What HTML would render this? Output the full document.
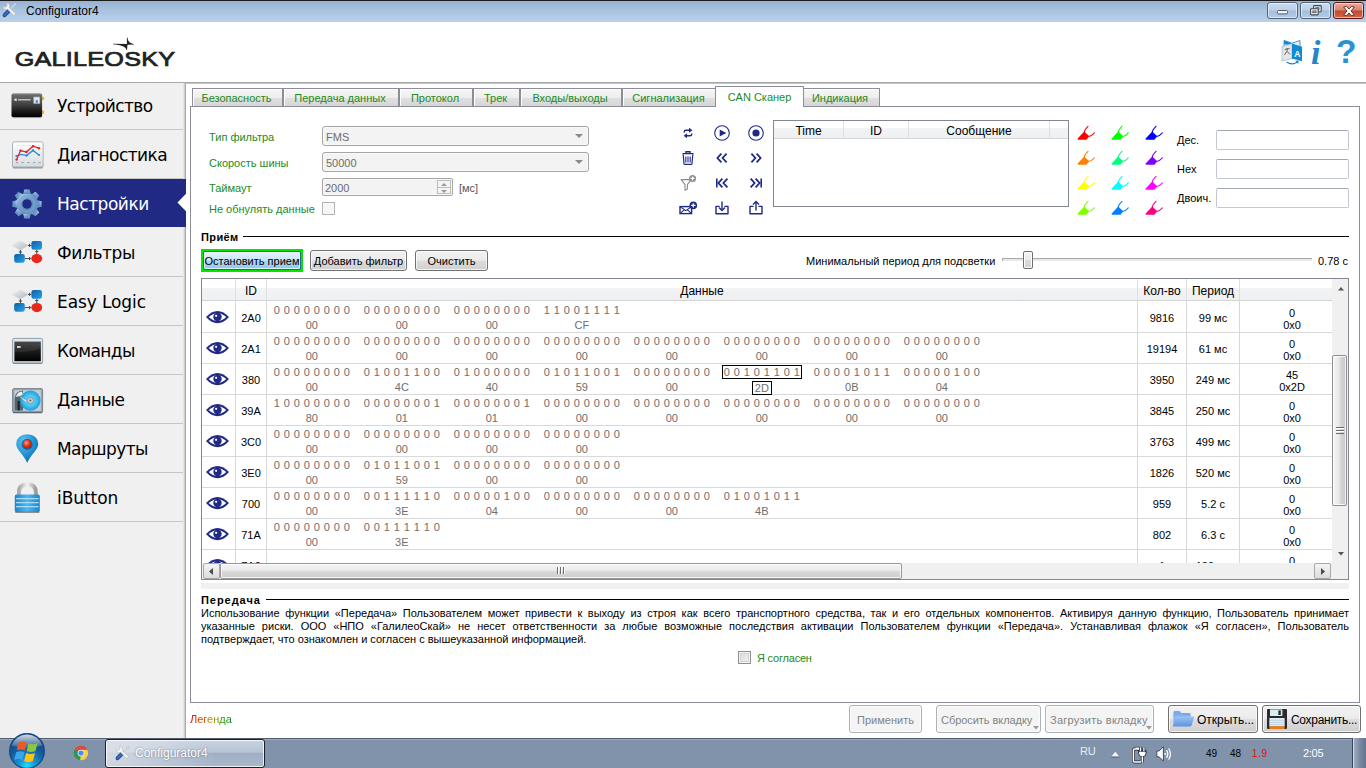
<!DOCTYPE html>
<html lang="ru">
<head>
<meta charset="utf-8">
<title>Configurator4</title>
<style>
*{box-sizing:border-box;margin:0;padding:0}
html,body{width:1366px;height:768px;overflow:hidden;background:#fff}
body{position:relative;font-family:"Liberation Sans","DejaVu Sans",sans-serif;font-size:11px;color:#000;line-height:13px}
.a{position:absolute}
.nw{white-space:nowrap}
.g{color:#228b22}
.jl{text-align:justify;text-align-last:justify;white-space:normal;line-height:13px;height:13px;overflow:hidden}
svg{position:absolute;overflow:visible}
/* title bar */
#titlebar{position:absolute;left:0;top:0;width:1366px;height:22px;background:linear-gradient(#98b2d3 0%,#a9c3e0 45%,#b9d1ea 100%);border-top:1px solid #1c1c1c}
#titlebar .t{position:absolute;left:26px;top:3px;font-size:12px;line-height:14px;color:#000;white-space:nowrap}
.wb{position:absolute;top:1px;height:17px;width:31px;border:1px solid #55627a;border-radius:3px;background:linear-gradient(#c9dbef 0%,#bcd0e8 48%,#a4bedc 52%,#b3cbe6 100%);box-shadow:inset 0 0 0 1px rgba(255,255,255,.55)}
.wb.c{background:linear-gradient(#e9a99b 0%,#d98572 48%,#c4482a 52%,#d06a4a 100%);border-color:#5b1a1a}
/* header */
#header{position:absolute;left:0;top:22px;width:1366px;height:60px;background:#fff}
#hshadow{position:absolute;left:0;top:82px;width:1366px;height:2px;background:linear-gradient(#9a9a9a,#d0d0d0)}
/* sidebar */
#sidebar{position:absolute;left:0;top:83px;width:186px;height:655px;background:linear-gradient(90deg,#f0f0f0 0,#f0f0f0 183px,#cfcfcf 184.5px,#989898 186px)}
.si{position:absolute;left:0;width:183px;height:49px;border-bottom:1px solid #c6c6c6;font-family:"DejaVu Sans","Liberation Sans",sans-serif;font-size:17px;line-height:20px;letter-spacing:-.55px}
.si span{position:absolute;left:57px;top:15px;white-space:nowrap}
.si.sel{background:#202a85;color:#fff;border-bottom:none;height:48px;width:186px}
/* tabs */
.tab{position:absolute;top:88px;height:18px;border:1px solid #8b8e98;border-bottom:none;background:linear-gradient(#f6f6f6 0%,#eeeeee 50%,#e0e0e0 51%,#d6d6d6 100%);color:#228b22;text-align:center;line-height:19px;white-space:nowrap;box-shadow:inset 1px 1px 0 #fff;padding-right:2px}
.tab.sel{top:86px;height:21px;background:#fff;line-height:21px;z-index:3;padding-right:0}
#pane{position:absolute;left:190px;top:106px;width:1170px;height:597px;border:1px solid #8b8e98;background:#fff}
/* form */
.combo{position:absolute;left:322px;width:267px;height:20px;border:1px solid #a6a6a6;border-radius:3px;background:#f3f3f3;color:#6d6d6d;line-height:20px;padding-left:3px;box-shadow:inset 0 0 0 1px #fafafa}
.combo i{position:absolute;right:5px;top:7px;width:0;height:0;border-left:4px solid transparent;border-right:4px solid transparent;border-top:4px solid #8a8a8a}
.edit{position:absolute;left:1216px;width:133px;height:20px;border:1px solid #c3c7cf;border-top-color:#a3a7b0;border-radius:2px;background:#fff}
.btn{position:absolute;height:22px;border:1px solid #707070;border-radius:3px;background:linear-gradient(#f2f2f2 0%,#ebebeb 48%,#dddddd 52%,#cfcfcf 100%);text-align:center;line-height:20px;white-space:nowrap;box-shadow:inset 0 0 0 1px rgba(255,255,255,.7)}
.btn.dis{color:#838383;border-color:#adb2b5;background:#f4f4f4}
.sect{position:absolute;left:201px;font-weight:bold;line-height:13px;white-space:nowrap}
.sectline{position:absolute;height:1px;background:#000}
/* table */
#tbl{position:absolute;left:201px;top:278px;width:1148px;height:302px;border:1px solid #828790;background:#fff;overflow:hidden}
.hdr{position:absolute;top:0;height:22px;background:linear-gradient(#fff 0%,#fff 42%,#f2f3f5 43%,#eff0f2 100%);border-right:1px solid #dedfe1;border-bottom:1px solid #d5d5d5;text-align:center;line-height:24px;white-space:nowrap;font-size:12px}
.row{position:absolute;left:0;width:1146px;height:31px;border-bottom:1px solid #d9d9d9}
.row .c{position:absolute;top:0;bottom:0;border-right:1px solid #d9d9d9;text-align:center;line-height:33px;white-space:nowrap}
.by{position:absolute;top:1px;width:90px;color:#6e6e6e;text-align:center;line-height:14px;white-space:nowrap}
.r0 .by{top:2px}
.r0 .c{line-height:35px}
.r0 svg{margin-top:.8px}
.by b{display:block;font-weight:normal;word-spacing:.82px;height:14px}
.by u{display:block;text-decoration:none;height:14px;margin-top:1px}
.v2{position:absolute;left:0;right:0;top:2px;line-height:12px}
/* taskbar */
#taskbar{position:absolute;left:0;top:738px;width:1366px;height:30px;background:linear-gradient(#525d72 0,#525d72 1px,#9aa9bf 1px,#9aa9bf 2px,#8093ab 2px,#8093ab 100%)}
</style>
</head>
<body>
<!-- ===== title bar ===== -->
<div id="titlebar"><div class="t">Configurator4</div>
<svg style="left:0;top:-1px" width="20" height="20" viewBox="0 0 20 20"><path d="M15.3 4 L9.4 9.9" stroke="#c9d1dc" stroke-width="1.7" stroke-linecap="round"/><path d="M13.6 4.6 L14.4 3.4 L15.9 3.5 L16 5 L14.9 5.9 Z" fill="#dde4ec" stroke="#9aa6b5" stroke-width=".4"/><path d="M9.3 10.3 L4.6 15.2" stroke="#1f4e9e" stroke-width="4" stroke-linecap="round"/><path d="M9.3 10.3 L4.6 15.2" stroke="#3f76c9" stroke-width="1.6" stroke-linecap="round" stroke-dasharray="1 1"/><path d="M9.7 6.2 L8.9 3.5 L6.6 3 L7.2 5.5 L5.5 7.2 L3 6.6 L3.5 8.9 L6.2 9.7 L7.6 9.2 L13.2 15 Q14.2 15.6 15 14.8 Q15.7 14 15 13 L9.2 7.6 Z" fill="#f2f3f4" stroke="#b4b2a8" stroke-width=".5" stroke-linejoin="round"/></svg>
<div class="wb" style="left:1267px"><svg style="left:9px;top:7px" width="11" height="5"><rect x=".5" y=".5" width="10" height="3.4" rx="1" fill="#f4f6f8" stroke="#545b66"/></svg></div>
<div class="wb" style="left:1300px"><svg style="left:9px;top:2px" width="12" height="11"><rect x="3.6" y=".6" width="7.6" height="6.2" rx=".8" fill="#f4f6f8" stroke="#3f4650" stroke-width="1.1"/><rect x="5.8" y="2.7" width="3.2" height="1.9" fill="#bcd0e8" stroke="#3f4650" stroke-width=".8"/><rect x=".6" y="3.7" width="7.6" height="6.2" rx=".8" fill="#f4f6f8" stroke="#3f4650" stroke-width="1.1"/><rect x="2.8" y="5.9" width="3.2" height="1.8" fill="#bcd0e8" stroke="#3f4650" stroke-width=".8"/></svg></div>
<div class="wb c" style="left:1333px"><svg style="left:9px;top:3px" width="12" height="10" viewBox="0 0 12 10"><path d="M.6 1 L3.6 .4 L6 3 L8.4 .4 L11.4 1 L8 5 L11.4 9 L8.4 9.6 L6 7 L3.6 9.6 L.6 9 L4 5 Z" fill="#f8f4f2" stroke="#5a2a25" stroke-width=".9" stroke-linejoin="round"/></svg></div>
</div>
<!-- ===== header ===== -->
<div id="header">
<svg style="left:0;top:0" width="200" height="60"><text transform="scale(1.2,1)" x="12.3" y="44.2" font-family="Liberation Sans, DejaVu Sans, sans-serif" font-size="21" fill="#222" stroke="#222" stroke-width=".75" textLength="133.6" lengthAdjust="spacing">GALILEOSKY</text>
<path d="M126.9 15.6 L127.5 15.6 Q127.7 21.3 133.9 22 L133.9 22.5 L127.5 22.7 L127 28.1 L126.5 28.1 Q126.2 23.3 113 22.2 L113 21.8 L126.9 22 Z" fill="#222"/></svg>
<!-- translate icon -->
<svg style="left:1280px;top:17px" width="24" height="26" viewBox="0 0 24 26"><path d="M4 1.5 L12 4.2 L20 1.5 L20 17 L12 19.6 L4 17 Z" fill="#e9eef3" stroke="#1b7fc9" stroke-width=".8"/><path d="M4 1.5 L12 4.2 L12 7 L4 5 Z" fill="#1387d3"/><path d="M2 7.6 L12 4.6 L12 19.6 L2 22 Z" fill="#e6e6e6" stroke="#9fb4c6" stroke-width=".7"/><path d="M12 4.6 L22 7.8 L22 22.2 L12 19.6 Z" fill="#0d8cd6"/><text x="14.3" y="17.6" font-family="Liberation Sans, sans-serif" font-size="8.5" font-weight="bold" fill="#fff">A</text><path d="M4.6 10.4 L9.6 9.6 M7.4 9.2 L7 12.2 L4.4 16 M7 12.4 L10 15.4" fill="none" stroke="#555" stroke-width=".9"/><path d="M6.5 23 Q12 26.6 17 23.2" fill="none" stroke="#1b86d0" stroke-width="1.2"/><path d="M15.2 21.8 L18.6 21.6 L18.2 25 Z" fill="#1b86d0"/></svg>
<div class="a nw" style="left:1311px;top:14px;width:12px;font:italic bold 34px/34px 'Liberation Serif','DejaVu Serif',serif;color:#2386cb">i</div>
<div class="a nw" style="left:1336px;top:12.5px;width:18px;font:bold 33.5px/34px 'Liberation Sans','DejaVu Sans',sans-serif;color:#2a92d4">?</div>
</div>
<div id="hshadow"></div>
<!-- ===== sidebar ===== -->
<div id="sidebar">
<div class="si" style="top:-2px"><span style="letter-spacing:-0.6px">Устройство</span>
<svg style="left:10px;top:11px" width="36" height="28" viewBox="0 0 36 28"><defs><linearGradient id="dv" x1="0" y1="0" x2="0" y2="1"><stop offset="0" stop-color="#9a9a9a"/><stop offset=".08" stop-color="#6a6a6a"/><stop offset=".5" stop-color="#3e3e3e"/><stop offset=".8" stop-color="#141414"/><stop offset="1" stop-color="#000"/></linearGradient></defs><rect x="1.4" y="23" width="31" height="3.2" rx="1.5" fill="#d2d2d2"/><rect x="31.6" y="4.8" width="2.6" height="3.2" rx=".8" fill="#e8c211"/><rect x="31.6" y="18.6" width="2.6" height="3.4" rx=".8" fill="#e8c211"/><rect x="1.5" y="1.2" width="30.6" height="24" rx="2" fill="url(#dv)"/><rect x="4.4" y="6.6" width="2.4" height="2.2" fill="#e4e4e4"/><rect x="8" y="7" width="12.6" height="1.5" fill="#d0d0d0" opacity=".85"/><rect x="23.8" y="5" width="6" height="6.4" fill="#dfeaf3" stroke="#9ab8d0" stroke-width=".6"/><rect x="25.6" y="8.2" width="2.4" height="2.6" fill="#5d8bb3"/></svg></div>
<div class="si" style="top:47px"><span style="letter-spacing:-0.55px">Диагностика</span>
<svg style="left:11px;top:10px" width="34" height="30" viewBox="0 0 34 30"><defs><linearGradient id="dg" x1="0" y1="0" x2="0" y2="1"><stop offset="0" stop-color="#fff"/><stop offset="1" stop-color="#d4dade"/></linearGradient></defs><rect x="1.5" y="1.8" width="30.6" height="26" rx="1.6" fill="url(#dg)" stroke="#aab3ba" stroke-width="1"/><rect x="2" y="26.6" width="29.6" height="1.8" fill="#9aa3aa"/><path d="M5 5.5H29M5 10H29M5 14.5H29M5 19H29" stroke="#e3e8ec" stroke-width=".8"/><path d="M5 22.6h2M10.6 22.6h2M16.4 22.6h2M22.2 22.6h2M27.6 22.6h2" stroke="#8d979e" stroke-width="1"/><path d="M5.4 16 L10.2 14.4 L15.6 15.6 L22 10.4 L28 15" fill="none" stroke="#2a88d8" stroke-width="1.25"/><path d="M5.6 19.6 L9.6 10.6 L15.4 12 L22 6.2 L28 8.2" fill="none" stroke="#e32227" stroke-width="1.25"/><g fill="#e32227"><circle cx="5.6" cy="19.6" r="1.2"/><circle cx="9.6" cy="10.6" r="1.2"/><circle cx="15.4" cy="12" r="1.2"/><circle cx="22" cy="6.2" r="1.2"/><circle cx="28" cy="8.2" r="1.2"/></g><g fill="#2a88d8"><circle cx="5.4" cy="16" r="1.1"/><circle cx="15.6" cy="15.6" r="1.1"/><circle cx="22" cy="10.4" r="1.1"/><circle cx="28" cy="15" r="1.1"/></g></svg></div>
<div class="si sel" style="top:96px"><span style="letter-spacing:-0.47px">Настройки</span>
<svg style="left:12px;top:9.6px" width="30" height="30" viewBox="-15 -15 30 30"><defs><radialGradient id="gr" cx="-.15" cy="-.3" r="1.1"><stop offset="0" stop-color="#cfe3f4"/><stop offset=".5" stop-color="#9dc1e2"/><stop offset="1" stop-color="#6894c2"/></radialGradient></defs><g fill="url(#gr)"><circle r="11"/><g id="tt"><path d="M-3.7 -10 L-2.7 -14.6 H2.7 L3.7 -10 Z"/><path d="M-3.7 10 L-2.7 14.6 H2.7 L3.7 10 Z"/></g><use href="#tt" transform="rotate(45)"/><use href="#tt" transform="rotate(90)"/><use href="#tt" transform="rotate(135)"/></g><circle r="7.6" fill="none" stroke="#7ba3cc" stroke-width="1.8" opacity=".75"/><circle r="5.2" fill="#202a85" stroke="#5f8bba" stroke-width="1"/></svg>
<svg style="left:176px;top:14px" width="10" height="20"><path d="M10 .8 L1.5 9.5 L10 18.2 Z" fill="#fff"/></svg></div>
<div class="si" style="top:145px"><span style="letter-spacing:-0.38px">Фильтры</span>
<svg id="flt" style="left:11.6px;top:8px" width="32" height="30" viewBox="0 0 32 30"><defs><linearGradient id="bl" x1="0" y1="0" x2="1" y2="1"><stop offset="0" stop-color="#0d5ea6"/><stop offset="1" stop-color="#2aa3e6"/></linearGradient><linearGradient id="dm" x1="0" y1="0" x2="1" y2="1"><stop offset="0" stop-color="#f2f4f5"/><stop offset="1" stop-color="#aeb9c0"/></linearGradient></defs><path d="M-.6 9.4 L8.2 4.4 L16.6 9.4 L8.2 14.2 Z" fill="url(#dm)"/><rect x="19.4" y="5" width="10.6" height="8.8" rx="2.2" fill="url(#bl)"/><rect x="2.2" y="18" width="10.6" height="8.8" rx="2.2" fill="url(#bl)"/><ellipse cx="24.8" cy="22.6" rx="5.4" ry="4.6" fill="#e8281c"/><path d="M16 9.4H19.4M8.4 14V18M24.8 13.8V18M12.8 22.6H19.4" stroke="#3a4b57" stroke-width="1"/><path d="M17.6 7.8v3.2M6.8 16h3.2M23.2 15.6h3.2M17.6 21v3.2" stroke="#3a4b57" stroke-width="1"/></svg></div>
<div class="si" style="top:194px"><span style="letter-spacing:-0.1px">Easy Logic</span>
<svg style="left:11.6px;top:8px" width="32" height="30" viewBox="0 0 32 30"><path d="M-.6 9.4 L8.2 4.4 L16.6 9.4 L8.2 14.2 Z" fill="url(#dm)"/><rect x="19.4" y="5" width="10.6" height="8.8" rx="2.2" fill="url(#bl)"/><rect x="2.2" y="18" width="10.6" height="8.8" rx="2.2" fill="url(#bl)"/><ellipse cx="24.8" cy="22.6" rx="5.4" ry="4.6" fill="#e8281c"/><path d="M16 9.4H19.4M8.4 14V18M24.8 13.8V18M12.8 22.6H19.4" stroke="#3a4b57" stroke-width="1"/><path d="M17.6 7.8v3.2M6.8 16h3.2M23.2 15.6h3.2M17.6 21v3.2" stroke="#3a4b57" stroke-width="1"/></svg></div>
<div class="si" style="top:243px"><span style="letter-spacing:-0.6px">Команды</span>
<svg style="left:11px;top:10px" width="34" height="30" viewBox="0 0 34 30"><defs><linearGradient id="cm" x1="0" y1="0" x2="0" y2="1"><stop offset="0" stop-color="#3a3a3a"/><stop offset=".5" stop-color="#1a1a1a"/><stop offset="1" stop-color="#000"/></linearGradient></defs><rect x="1.6" y="2.4" width="30" height="25" rx="1.4" fill="#dfe5ea" stroke="#93a3b0" stroke-width="1"/><rect x="3.4" y="5.6" width="26.4" height="19.6" fill="url(#cm)"/><path d="M3.4 5.6 H29.8 V12 Q18 17 3.4 15.6 Z" fill="#fff" opacity=".08"/><rect x="6" y="10" width="3.6" height="2" fill="#cfcfcf"/><rect x="2" y="26.6" width="29.2" height="1.4" fill="#7e8e9b"/></svg></div>
<div class="si" style="top:292px"><span style="letter-spacing:-0.38px">Данные</span>
<svg style="left:11px;top:12px" width="34" height="28" viewBox="0 0 34 28"><defs><radialGradient id="ds" cx=".5" cy=".5" r=".5"><stop offset="0" stop-color="#8fe0fb"/><stop offset=".6" stop-color="#3fc1f2"/><stop offset="1" stop-color="#1b9fdc"/></radialGradient></defs><rect x="1.6" y="1.6" width="30" height="24" rx="1.6" fill="#9aa7b1" stroke="#77858f" stroke-width="1"/><rect x="3.4" y="3.2" width="26.4" height="20.6" fill="#c5ced5"/><path d="M3.6 12 Q4 4 12 3.6 L12 23.4 H3.6 Z" fill="#55636e"/><path d="M5 10 Q6 5 11 4.6 L12 8 Z" fill="#eef1f3"/><rect x="6.6" y="14" width="2.2" height="9.4" fill="#1d252b"/><circle cx="19.4" cy="13.6" r="10.2" fill="url(#ds)"/><circle cx="19.4" cy="13.6" r="3.2" fill="#c9ced2" stroke="#7d8a93" stroke-width=".8"/><circle cx="19.4" cy="13.6" r="1" fill="#55636e"/><path d="M7.4 8.6 L15.6 13.8 L14.8 15 Z" fill="#fff" stroke="#9aa7b1" stroke-width=".4"/><rect x="2" y="24.8" width="29.2" height="1.4" fill="#5c6a74"/></svg></div>
<div class="si" style="top:341px"><span style="letter-spacing:-0.6px">Маршруты</span>
<svg style="left:15px;top:9px" width="26" height="32" viewBox="0 0 26 32"><defs><radialGradient id="pn" cx=".35" cy=".25" r=".9"><stop offset="0" stop-color="#5cc3f2"/><stop offset=".55" stop-color="#1f8fd2"/><stop offset="1" stop-color="#0a5d9c"/></radialGradient><radialGradient id="pr" cx=".4" cy=".35" r=".7"><stop offset="0" stop-color="#ff9d7a"/><stop offset=".5" stop-color="#e33a1c"/><stop offset="1" stop-color="#a91505"/></radialGradient></defs><path d="M12.2 30 Q10.6 25.6 5.4 19.4 Q1.2 14.6 1.2 11 Q1.6 1.6 12.2 1.2 Q22.8 1.6 23.2 11 Q23.2 14.6 19 19.4 Q13.8 25.6 12.2 30 Z" fill="url(#pn)"/><circle cx="12.2" cy="11.4" r="5.6" fill="#0d6fb3"/><circle cx="12.2" cy="11.2" r="4.4" fill="url(#pr)"/></svg></div>
<div class="si" style="top:390px"><span style="letter-spacing:-0.07px">iButton</span>
<svg style="left:13px;top:8px" width="30" height="34" viewBox="0 0 30 34"><defs><linearGradient id="lk" x1="0" y1="0" x2="1" y2="0"><stop offset="0" stop-color="#1a86cc"/><stop offset=".5" stop-color="#4db7ee"/><stop offset="1" stop-color="#1a86cc"/></linearGradient><linearGradient id="sh" x1="0" y1="0" x2="1" y2="0"><stop offset="0" stop-color="#a9a9a9"/><stop offset=".5" stop-color="#f4f4f4"/><stop offset="1" stop-color="#9a9a9a"/></linearGradient></defs><path d="M6 16 V11 Q6 3.4 14.4 3.4 Q22.8 3.4 22.8 11 V16" fill="none" stroke="url(#sh)" stroke-width="4"/><rect x="1.8" y="13.6" width="25" height="17.6" rx="1.6" fill="url(#lk)"/><path d="M3 17.6H25.6M3 21.6H25.6M3 25.6H25.6" stroke="#bfe6fb" stroke-width="1.3" opacity=".85"/><rect x="2.2" y="30.6" width="24.2" height="1.4" fill="#6d6d6d" opacity=".7"/></svg></div>
</div>
<!-- ===== tabs & pane ===== -->
<div id="pane"></div>
<div class="tab" style="left:192px;width:91px">Безопасность</div>
<div class="tab" style="left:283px;width:116px">Передача данных</div>
<div class="tab" style="left:399px;width:74px">Протокол</div>
<div class="tab" style="left:473px;width:47px">Трек</div>
<div class="tab" style="left:520px;width:102px">Входы/выходы</div>
<div class="tab" style="left:622px;width:95px">Сигнализация</div>
<div class="tab sel" style="left:715px;width:89px">CAN Сканер</div>
<div class="tab" style="left:802px;width:78px">Индикация</div>
<div class="a nw g" style="left:209px;top:131px">Тип фильтра</div>
<div class="a nw g" style="left:209px;top:157px">Скорость шины</div>
<div class="a nw g" style="left:209px;top:182px">Таймаут</div>
<div class="a nw g" style="left:209px;top:203px">Не обнулять данные</div>
<div class="combo" style="top:126px">FMS<i></i></div>
<div class="combo" style="top:152px">50000<i></i></div>
<div class="combo" style="top:178px;width:131px;height:18px;line-height:18px;border-radius:2px;padding-left:2px">2000<div class="a" style="right:1px;top:1px;width:14px;height:14px;border:1px solid #bdbdbd;background:#f4f4f4"></div><div class="a" style="right:2px;top:8px;width:12px;height:1px;background:#bdbdbd"></div><svg style="right:5px;top:4px" width="6" height="10"><path d="M0 3 L3 0 L6 3 Z M0 7 L3 10 L6 7 Z" fill="#9a9a9a"/></svg></div>
<div class="a nw" style="left:459px;top:182px;color:#555">[мс]</div>
<div class="a" style="left:322px;top:202px;width:13px;height:13px;border:1px solid #b4b4b4;background:#f6f6f6"></div>
<svg style="left:678.3px;top:123.0px" width="20" height="20" viewBox="-10.0 -10.0 20 20"><g fill="none" stroke="#202a85" stroke-width="1.5"><path d="M-3.7 -.4 V-1.2 Q-3.7 -2.8 -2.1 -2.8 H1.6"/><path d="M3.7 .4 V1.2 Q3.7 2.8 2.1 2.8 H-1.6"/></g><path d="M1 -5.3 L4.4 -2.8 L1 -.3 Z M-1 5.3 L-4.4 2.8 L-1 .3 Z" fill="#202a85"/></svg>
<svg style="left:712.2px;top:123.0px" width="20" height="20" viewBox="-10.0 -10.0 20 20"><circle r="7.3" fill="none" stroke="#202a85" stroke-width="1.1"/><path d="M-2.3 -3.6 L4.3 0 L-2.3 3.6 Z" fill="#202a85"/></svg>
<svg style="left:746.0px;top:123.0px" width="20" height="20" viewBox="-10.0 -10.0 20 20"><circle r="7.3" fill="none" stroke="#202a85" stroke-width="1.1"/><circle r="3.6" fill="#202a85"/></svg>
<svg style="left:678.3px;top:148.2px" width="20" height="20" viewBox="-10.0 -10.0 20 20"><path d="M-5.6 -4.4 H5.6 M-2 -4.6 V-6.2 H2 V-4.6" fill="none" stroke="#202a85" stroke-width="1.4"/><path d="M-4.8 -3.6 L-4 5.6 Q-3.9 6.4 -3 6.4 H3 Q3.9 6.4 4 5.6 L4.8 -3.6" fill="none" stroke="#202a85" stroke-width="1.2"/><path d="M-2.2 -1.6 V4.6 M0 -1.6 V4.6 M2.2 -1.6 V4.6" stroke="#202a85" stroke-width="1.1"/></svg>
<svg style="left:712.2px;top:148.2px" width="20" height="20" viewBox="-10.0 -10.0 20 20"><path d="M-.6 -4.4 L-4.6 0 L-.6 4.4 M4.6 -4.4 L.6 0 L4.6 4.4" fill="none" stroke="#202a85" stroke-width="1.8"/></svg>
<svg style="left:746.0px;top:148.2px" width="20" height="20" viewBox="-10.0 -10.0 20 20"><path d="M.6 -4.4 L4.6 0 L.6 4.4 M-4.6 -4.4 L-.6 0 L-4.6 4.4" fill="none" stroke="#202a85" stroke-width="1.8"/></svg>
<svg style="left:678.3px;top:173.0px" width="20" height="20" viewBox="-10.0 -10.0 20 20"><path d="M-6.8 -3.4 H3 L-.6 1.6 V6 L-3 7.2 V1.6 Z" fill="#fff" stroke="#8c8c8c" stroke-width="1.1" stroke-linejoin="round"/><circle cx="4.6" cy="-4.6" r="3.5" fill="#8e8e8e"/><path d="M2.6 -4.6 H6.6 M4.6 -6.6 V-2.6" stroke="#fff" stroke-width="1.2"/></svg>
<svg style="left:712.2px;top:173.0px" width="20" height="20" viewBox="-10.0 -10.0 20 20"><path d="M-5.2 -4.6 V4.6" stroke="#202a85" stroke-width="1.6"/><path d="M.4 -4.4 L-3.6 0 L.4 4.4 M5.4 -4.4 L1.4 0 L5.4 4.4" fill="none" stroke="#202a85" stroke-width="1.8"/></svg>
<svg style="left:746.0px;top:173.0px" width="20" height="20" viewBox="-10.0 -10.0 20 20"><path d="M5.2 -4.6 V4.6" stroke="#202a85" stroke-width="1.6"/><path d="M-.4 -4.4 L3.6 0 L-.4 4.4 M-5.4 -4.4 L-1.4 0 L-5.4 4.4" fill="none" stroke="#202a85" stroke-width="1.8"/></svg>
<svg style="left:678.3px;top:198.0px" width="20" height="20" viewBox="-10.0 -10.0 20 20"><rect x="-8" y="-1.4" width="11.6" height="7" fill="#fff" stroke="#202a85" stroke-width="1.4"/><path d="M-8 -1.4 L-2.2 2.6 L3.6 -1.4 M-8 5.6 L-3.6 1.6 M3.6 5.6 L-.8 1.6" fill="none" stroke="#202a85" stroke-width="1.1"/><circle cx="5.3" cy="-2.6" r="3.8" fill="#202a85"/><path d="M3.1 -2.6 H7.5 M5.3 -4.8 V-.4" stroke="#fff" stroke-width="1.2"/></svg>
<svg style="left:712.2px;top:198.0px" width="20" height="20" viewBox="-10.0 -10.0 20 20"><path d="M-2.4 -1.6 H-6 V5.8 H6 V-1.6 H2.4" fill="none" stroke="#202a85" stroke-width="1.4" stroke-linejoin="round"/><path d="M0 -6.6 V2" stroke="#202a85" stroke-width="1.4"/><path d="M-3 -.6 L0 2.6 L3 -.6" fill="none" stroke="#202a85" stroke-width="1.4"/></svg>
<svg style="left:746.0px;top:198.0px" width="20" height="20" viewBox="-10.0 -10.0 20 20"><path d="M-2.4 -1.6 H-6 V5.8 H6 V-1.6 H2.4" fill="none" stroke="#202a85" stroke-width="1.4" stroke-linejoin="round"/><path d="M0 -6 V2.6" stroke="#202a85" stroke-width="1.4"/><path d="M-3 -3.4 L0 -6.6 L3 -3.4" fill="none" stroke="#202a85" stroke-width="1.4"/></svg>
<div class="a" style="left:773px;top:120px;width:296px;height:87px;border:1px solid #828790;background:#fff">
<div class="hdr" style="left:0;width:70px;height:18px;line-height:20px;font-size:12px">Time</div>
<div class="hdr" style="left:70px;width:65px;height:18px;line-height:20px;font-size:12px">ID</div>
<div class="hdr" style="left:135px;width:141px;height:18px;line-height:20px;font-size:12px">Сообщение</div>
<div class="hdr" style="left:276px;width:18px;height:18px;border-right:none"></div>
</div>
<svg style="left:1076.4px;top:125.0px" width="20" height="16" viewBox="-10.0 -8.0 20 16"><path d="M-8.3 5.6 L-1.8 -1.4 L3.3 3.2 L.4 6.8 H-7.6 Q-8.9 6.8 -8.3 5.6 Z" fill="#ff0000"/><path d="M-1.6 -.8 Q-2 -2.4 2 -6.6 M3 3.2 Q4.8 3.4 8.3 -.2" fill="none" stroke="#ff0000" stroke-width="1.15" stroke-linecap="round"/></svg>
<svg style="left:1076.4px;top:150.2px" width="20" height="16" viewBox="-10.0 -8.0 20 16"><path d="M-8.3 5.6 L-1.8 -1.4 L3.3 3.2 L.4 6.8 H-7.6 Q-8.9 6.8 -8.3 5.6 Z" fill="#ff8000"/><path d="M-1.6 -.8 Q-2 -2.4 2 -6.6 M3 3.2 Q4.8 3.4 8.3 -.2" fill="none" stroke="#ff8000" stroke-width="1.15" stroke-linecap="round"/></svg>
<svg style="left:1076.4px;top:175.3px" width="20" height="16" viewBox="-10.0 -8.0 20 16"><path d="M-8.3 5.6 L-1.8 -1.4 L3.3 3.2 L.4 6.8 H-7.6 Q-8.9 6.8 -8.3 5.6 Z" fill="#ffff00"/><path d="M-1.6 -.8 Q-2 -2.4 2 -6.6 M3 3.2 Q4.8 3.4 8.3 -.2" fill="none" stroke="#ffff00" stroke-width="1.15" stroke-linecap="round"/></svg>
<svg style="left:1076.4px;top:200.1px" width="20" height="16" viewBox="-10.0 -8.0 20 16"><path d="M-8.3 5.6 L-1.8 -1.4 L3.3 3.2 L.4 6.8 H-7.6 Q-8.9 6.8 -8.3 5.6 Z" fill="#80ff00"/><path d="M-1.6 -.8 Q-2 -2.4 2 -6.6 M3 3.2 Q4.8 3.4 8.3 -.2" fill="none" stroke="#80ff00" stroke-width="1.15" stroke-linecap="round"/></svg>
<svg style="left:1109.8px;top:125.0px" width="20" height="16" viewBox="-10.0 -8.0 20 16"><path d="M-8.3 5.6 L-1.8 -1.4 L3.3 3.2 L.4 6.8 H-7.6 Q-8.9 6.8 -8.3 5.6 Z" fill="#00ff00"/><path d="M-1.6 -.8 Q-2 -2.4 2 -6.6 M3 3.2 Q4.8 3.4 8.3 -.2" fill="none" stroke="#00ff00" stroke-width="1.15" stroke-linecap="round"/></svg>
<svg style="left:1109.8px;top:150.2px" width="20" height="16" viewBox="-10.0 -8.0 20 16"><path d="M-8.3 5.6 L-1.8 -1.4 L3.3 3.2 L.4 6.8 H-7.6 Q-8.9 6.8 -8.3 5.6 Z" fill="#00ff80"/><path d="M-1.6 -.8 Q-2 -2.4 2 -6.6 M3 3.2 Q4.8 3.4 8.3 -.2" fill="none" stroke="#00ff80" stroke-width="1.15" stroke-linecap="round"/></svg>
<svg style="left:1109.8px;top:175.3px" width="20" height="16" viewBox="-10.0 -8.0 20 16"><path d="M-8.3 5.6 L-1.8 -1.4 L3.3 3.2 L.4 6.8 H-7.6 Q-8.9 6.8 -8.3 5.6 Z" fill="#00ffff"/><path d="M-1.6 -.8 Q-2 -2.4 2 -6.6 M3 3.2 Q4.8 3.4 8.3 -.2" fill="none" stroke="#00ffff" stroke-width="1.15" stroke-linecap="round"/></svg>
<svg style="left:1109.8px;top:200.1px" width="20" height="16" viewBox="-10.0 -8.0 20 16"><path d="M-8.3 5.6 L-1.8 -1.4 L3.3 3.2 L.4 6.8 H-7.6 Q-8.9 6.8 -8.3 5.6 Z" fill="#0080ff"/><path d="M-1.6 -.8 Q-2 -2.4 2 -6.6 M3 3.2 Q4.8 3.4 8.3 -.2" fill="none" stroke="#0080ff" stroke-width="1.15" stroke-linecap="round"/></svg>
<svg style="left:1144.3px;top:125.0px" width="20" height="16" viewBox="-10.0 -8.0 20 16"><path d="M-8.3 5.6 L-1.8 -1.4 L3.3 3.2 L.4 6.8 H-7.6 Q-8.9 6.8 -8.3 5.6 Z" fill="#0000ff"/><path d="M-1.6 -.8 Q-2 -2.4 2 -6.6 M3 3.2 Q4.8 3.4 8.3 -.2" fill="none" stroke="#0000ff" stroke-width="1.15" stroke-linecap="round"/></svg>
<svg style="left:1144.3px;top:150.2px" width="20" height="16" viewBox="-10.0 -8.0 20 16"><path d="M-8.3 5.6 L-1.8 -1.4 L3.3 3.2 L.4 6.8 H-7.6 Q-8.9 6.8 -8.3 5.6 Z" fill="#8000ff"/><path d="M-1.6 -.8 Q-2 -2.4 2 -6.6 M3 3.2 Q4.8 3.4 8.3 -.2" fill="none" stroke="#8000ff" stroke-width="1.15" stroke-linecap="round"/></svg>
<svg style="left:1144.3px;top:175.3px" width="20" height="16" viewBox="-10.0 -8.0 20 16"><path d="M-8.3 5.6 L-1.8 -1.4 L3.3 3.2 L.4 6.8 H-7.6 Q-8.9 6.8 -8.3 5.6 Z" fill="#ff00ff"/><path d="M-1.6 -.8 Q-2 -2.4 2 -6.6 M3 3.2 Q4.8 3.4 8.3 -.2" fill="none" stroke="#ff00ff" stroke-width="1.15" stroke-linecap="round"/></svg>
<svg style="left:1144.3px;top:200.1px" width="20" height="16" viewBox="-10.0 -8.0 20 16"><path d="M-8.3 5.6 L-1.8 -1.4 L3.3 3.2 L.4 6.8 H-7.6 Q-8.9 6.8 -8.3 5.6 Z" fill="#ff0080"/><path d="M-1.6 -.8 Q-2 -2.4 2 -6.6 M3 3.2 Q4.8 3.4 8.3 -.2" fill="none" stroke="#ff0080" stroke-width="1.15" stroke-linecap="round"/></svg>
<div class="a nw" style="left:1177px;top:134px">Дес.</div>
<div class="a nw" style="left:1177px;top:163px">Hex</div>
<div class="a nw" style="left:1177px;top:192px">Двоич.</div>
<div class="edit" style="top:130px"></div><div class="edit" style="top:159px"></div><div class="edit" style="top:188px"></div>
<div class="sect" style="top:231px;letter-spacing:.4px">Приём</div><div class="sectline" style="left:243px;top:236px;width:1106px"></div>
<div class="a" style="left:201px;top:249px;width:102px;height:23px;background:#00e800"></div>
<div class="btn" style="left:203px;top:251px;width:98px;height:19px;line-height:19px;border-color:#2c628b;border-radius:2px;background:linear-gradient(#e3f3fc 0%,#c9e6f8 48%,#a9d7f3 52%,#8fc9ee 100%)">Остановить прием</div>
<div class="btn" style="left:310px;top:250px;width:97px;height:21px;line-height:21px">Добавить фильтр</div>
<div class="btn" style="left:415px;top:250px;width:73px;height:21px;line-height:21px">Очистить</div>
<div class="a nw" style="left:806px;top:255px">Минимальный период для подсветки</div>
<div class="a" style="left:1002px;top:258px;width:310px;height:3px;border-top:1px solid #a9a9a9;border-left:1px solid #a9a9a9;background:#e7eaea"></div>
<div class="a" style="left:1023px;top:251px;width:10px;height:18px;border:1px solid #707070;border-radius:2px;background:linear-gradient(#f3f3f3 0%,#ebebeb 49%,#dcdcdc 50%,#d2d2d2 100%);box-shadow:inset 0 0 0 1px #fff"></div>
<div class="a nw" style="left:1318px;top:255px">0.78 с</div>
<!-- ===== CAN table ===== -->
<div id="tbl">
<div class="hdr" style="left:0;width:34px"></div><div class="hdr" style="left:34px;width:31px">ID</div><div class="hdr" style="left:65px;width:871px">Данные</div><div class="hdr" style="left:936px;width:49px">Кол-во</div><div class="hdr" style="left:985px;width:53px">Период</div><div class="hdr" style="left:1038px;width:92px;border-right:none"></div>
<div class="row r0" style="top:22px;height:32px">
<div class="c" style="left:0;width:34px"><svg style="left:3.4px;top:8.2px" width="25" height="14" viewBox="-12.5 -7 25 14"><path d="M-11.5 0 Q-6 -6 0 -6 Q6 -6 11.5 0 Q6 6.2 0 6.2 Q-6 6.2 -11.5 0 Z" fill="#202a85"/><path d="M-8.8 0 Q-4.6 -3.8 0 -3.8 Q4.6 -3.8 8.8 0 Q4.6 4 0 4 Q-4.6 4 -8.8 0 Z" fill="#fff"/><circle cx="0" cy="0" r="4.2" fill="#202a85"/><circle cx="-1.4" cy="-1.2" r="1.1" fill="#fff"/></svg></div><div class="c" style="left:34px;width:31px">2A0</div><div class="c" style="left:65px;width:871px"><div class="by" style="left:-0.2px"><b>0 0 0 0 0 0 0 0</b><u>00</u></div><div class="by" style="left:89.8px"><b>0 0 0 0 0 0 0 0</b><u>00</u></div><div class="by" style="left:179.8px"><b>0 0 0 0 0 0 0 0</b><u>00</u></div><div class="by" style="left:269.8px"><b>1 1 0 0 1 1 1 1</b><u>CF</u></div></div><div class="c" style="left:936px;width:49px">9816</div><div class="c" style="left:985px;width:53px">99 мс</div><div class="c" style="left:1038px;width:104px;border-right:none;line-height:12px;padding-top:6px">0<br>0x0</div></div>
<div class="row" style="top:54px">
<div class="c" style="left:0;width:34px"><svg style="left:3.4px;top:8.2px" width="25" height="14" viewBox="-12.5 -7 25 14"><path d="M-11.5 0 Q-6 -6 0 -6 Q6 -6 11.5 0 Q6 6.2 0 6.2 Q-6 6.2 -11.5 0 Z" fill="#202a85"/><path d="M-8.8 0 Q-4.6 -3.8 0 -3.8 Q4.6 -3.8 8.8 0 Q4.6 4 0 4 Q-4.6 4 -8.8 0 Z" fill="#fff"/><circle cx="0" cy="0" r="4.2" fill="#202a85"/><circle cx="-1.4" cy="-1.2" r="1.1" fill="#fff"/></svg></div><div class="c" style="left:34px;width:31px">2A1</div><div class="c" style="left:65px;width:871px"><div class="by" style="left:-0.2px"><b>0 0 0 0 0 0 0 0</b><u>00</u></div><div class="by" style="left:89.8px"><b>0 0 0 0 0 0 0 0</b><u>00</u></div><div class="by" style="left:179.8px"><b>0 0 0 0 0 0 0 0</b><u>00</u></div><div class="by" style="left:269.8px"><b>0 0 0 0 0 0 0 0</b><u>00</u></div><div class="by" style="left:359.8px"><b>0 0 0 0 0 0 0 0</b><u>00</u></div><div class="by" style="left:449.8px"><b>0 0 0 0 0 0 0 0</b><u>00</u></div><div class="by" style="left:539.8px"><b>0 0 0 0 0 0 0 0</b><u>00</u></div><div class="by" style="left:629.8px"><b>0 0 0 0 0 0 0 0</b><u>00</u></div></div><div class="c" style="left:936px;width:49px">19194</div><div class="c" style="left:985px;width:53px">61 мс</div><div class="c" style="left:1038px;width:104px;border-right:none;line-height:12px;padding-top:5px">0<br>0x0</div></div>
<div class="row" style="top:85px">
<div class="c" style="left:0;width:34px"><svg style="left:3.4px;top:8.2px" width="25" height="14" viewBox="-12.5 -7 25 14"><path d="M-11.5 0 Q-6 -6 0 -6 Q6 -6 11.5 0 Q6 6.2 0 6.2 Q-6 6.2 -11.5 0 Z" fill="#202a85"/><path d="M-8.8 0 Q-4.6 -3.8 0 -3.8 Q4.6 -3.8 8.8 0 Q4.6 4 0 4 Q-4.6 4 -8.8 0 Z" fill="#fff"/><circle cx="0" cy="0" r="4.2" fill="#202a85"/><circle cx="-1.4" cy="-1.2" r="1.1" fill="#fff"/></svg></div><div class="c" style="left:34px;width:31px">380</div><div class="c" style="left:65px;width:871px"><div class="by" style="left:-0.2px"><b>0 0 0 0 0 0 0 0</b><u>00</u></div><div class="by" style="left:89.8px"><b>0 1 0 0 1 1 0 0</b><u>4C</u></div><div class="by" style="left:179.8px"><b>0 1 0 0 0 0 0 0</b><u>40</u></div><div class="by" style="left:269.8px"><b>0 1 0 1 1 0 0 1</b><u>59</u></div><div class="by" style="left:359.8px"><b>0 0 0 0 0 0 0 0</b><u>00</u></div><div class="by" style="left:449.8px"><b style="outline:1px solid #000;outline-offset:-1px;margin:0 5px;padding:0">0 0 1 0 1 1 0 1</b><u><i style="font-style:normal;display:inline-block;width:20px;height:14px;border:1px solid #000;line-height:13px;margin-top:1px">2D</i></u></div><div class="by" style="left:539.8px"><b>0 0 0 0 1 0 1 1</b><u>0B</u></div><div class="by" style="left:629.8px"><b>0 0 0 0 0 1 0 0</b><u>04</u></div></div><div class="c" style="left:936px;width:49px">3950</div><div class="c" style="left:985px;width:53px">249 мс</div><div class="c" style="left:1038px;width:104px;border-right:none;line-height:12px;padding-top:5px">45<br>0x2D</div></div>
<div class="row" style="top:116px">
<div class="c" style="left:0;width:34px"><svg style="left:3.4px;top:8.2px" width="25" height="14" viewBox="-12.5 -7 25 14"><path d="M-11.5 0 Q-6 -6 0 -6 Q6 -6 11.5 0 Q6 6.2 0 6.2 Q-6 6.2 -11.5 0 Z" fill="#202a85"/><path d="M-8.8 0 Q-4.6 -3.8 0 -3.8 Q4.6 -3.8 8.8 0 Q4.6 4 0 4 Q-4.6 4 -8.8 0 Z" fill="#fff"/><circle cx="0" cy="0" r="4.2" fill="#202a85"/><circle cx="-1.4" cy="-1.2" r="1.1" fill="#fff"/></svg></div><div class="c" style="left:34px;width:31px">39A</div><div class="c" style="left:65px;width:871px"><div class="by" style="left:-0.2px"><b>1 0 0 0 0 0 0 0</b><u>80</u></div><div class="by" style="left:89.8px"><b>0 0 0 0 0 0 0 1</b><u>01</u></div><div class="by" style="left:179.8px"><b>0 0 0 0 0 0 0 1</b><u>01</u></div><div class="by" style="left:269.8px"><b>0 0 0 0 0 0 0 0</b><u>00</u></div><div class="by" style="left:359.8px"><b>0 0 0 0 0 0 0 0</b><u>00</u></div><div class="by" style="left:449.8px"><b>0 0 0 0 0 0 0 0</b><u>00</u></div><div class="by" style="left:539.8px"><b>0 0 0 0 0 0 0 0</b><u>00</u></div><div class="by" style="left:629.8px"><b>0 0 0 0 0 0 0 0</b><u>00</u></div></div><div class="c" style="left:936px;width:49px">3845</div><div class="c" style="left:985px;width:53px">250 мс</div><div class="c" style="left:1038px;width:104px;border-right:none;line-height:12px;padding-top:5px">0<br>0x0</div></div>
<div class="row" style="top:147px">
<div class="c" style="left:0;width:34px"><svg style="left:3.4px;top:8.2px" width="25" height="14" viewBox="-12.5 -7 25 14"><path d="M-11.5 0 Q-6 -6 0 -6 Q6 -6 11.5 0 Q6 6.2 0 6.2 Q-6 6.2 -11.5 0 Z" fill="#202a85"/><path d="M-8.8 0 Q-4.6 -3.8 0 -3.8 Q4.6 -3.8 8.8 0 Q4.6 4 0 4 Q-4.6 4 -8.8 0 Z" fill="#fff"/><circle cx="0" cy="0" r="4.2" fill="#202a85"/><circle cx="-1.4" cy="-1.2" r="1.1" fill="#fff"/></svg></div><div class="c" style="left:34px;width:31px">3C0</div><div class="c" style="left:65px;width:871px"><div class="by" style="left:-0.2px"><b>0 0 0 0 0 0 0 0</b><u>00</u></div><div class="by" style="left:89.8px"><b>0 0 0 0 0 0 0 0</b><u>00</u></div><div class="by" style="left:179.8px"><b>0 0 0 0 0 0 0 0</b><u>00</u></div><div class="by" style="left:269.8px"><b>0 0 0 0 0 0 0 0</b><u>00</u></div></div><div class="c" style="left:936px;width:49px">3763</div><div class="c" style="left:985px;width:53px">499 мс</div><div class="c" style="left:1038px;width:104px;border-right:none;line-height:12px;padding-top:5px">0<br>0x0</div></div>
<div class="row" style="top:178px">
<div class="c" style="left:0;width:34px"><svg style="left:3.4px;top:8.2px" width="25" height="14" viewBox="-12.5 -7 25 14"><path d="M-11.5 0 Q-6 -6 0 -6 Q6 -6 11.5 0 Q6 6.2 0 6.2 Q-6 6.2 -11.5 0 Z" fill="#202a85"/><path d="M-8.8 0 Q-4.6 -3.8 0 -3.8 Q4.6 -3.8 8.8 0 Q4.6 4 0 4 Q-4.6 4 -8.8 0 Z" fill="#fff"/><circle cx="0" cy="0" r="4.2" fill="#202a85"/><circle cx="-1.4" cy="-1.2" r="1.1" fill="#fff"/></svg></div><div class="c" style="left:34px;width:31px">3E0</div><div class="c" style="left:65px;width:871px"><div class="by" style="left:-0.2px"><b>0 0 0 0 0 0 0 0</b><u>00</u></div><div class="by" style="left:89.8px"><b>0 1 0 1 1 0 0 1</b><u>59</u></div><div class="by" style="left:179.8px"><b>0 0 0 0 0 0 0 0</b><u>00</u></div><div class="by" style="left:269.8px"><b>0 0 0 0 0 0 0 0</b><u>00</u></div></div><div class="c" style="left:936px;width:49px">1826</div><div class="c" style="left:985px;width:53px">520 мс</div><div class="c" style="left:1038px;width:104px;border-right:none;line-height:12px;padding-top:5px">0<br>0x0</div></div>
<div class="row" style="top:209px">
<div class="c" style="left:0;width:34px"><svg style="left:3.4px;top:8.2px" width="25" height="14" viewBox="-12.5 -7 25 14"><path d="M-11.5 0 Q-6 -6 0 -6 Q6 -6 11.5 0 Q6 6.2 0 6.2 Q-6 6.2 -11.5 0 Z" fill="#202a85"/><path d="M-8.8 0 Q-4.6 -3.8 0 -3.8 Q4.6 -3.8 8.8 0 Q4.6 4 0 4 Q-4.6 4 -8.8 0 Z" fill="#fff"/><circle cx="0" cy="0" r="4.2" fill="#202a85"/><circle cx="-1.4" cy="-1.2" r="1.1" fill="#fff"/></svg></div><div class="c" style="left:34px;width:31px">700</div><div class="c" style="left:65px;width:871px"><div class="by" style="left:-0.2px"><b>0 0 0 0 0 0 0 0</b><u>00</u></div><div class="by" style="left:89.8px"><b>0 0 1 1 1 1 1 0</b><u>3E</u></div><div class="by" style="left:179.8px"><b>0 0 0 0 0 1 0 0</b><u>04</u></div><div class="by" style="left:269.8px"><b>0 0 0 0 0 0 0 0</b><u>00</u></div><div class="by" style="left:359.8px"><b>0 0 0 0 0 0 0 0</b><u>00</u></div><div class="by" style="left:449.8px"><b>0 1 0 0 1 0 1 1</b><u>4B</u></div></div><div class="c" style="left:936px;width:49px">959</div><div class="c" style="left:985px;width:53px">5.2 с</div><div class="c" style="left:1038px;width:104px;border-right:none;line-height:12px;padding-top:5px">0<br>0x0</div></div>
<div class="row" style="top:240px">
<div class="c" style="left:0;width:34px"><svg style="left:3.4px;top:8.2px" width="25" height="14" viewBox="-12.5 -7 25 14"><path d="M-11.5 0 Q-6 -6 0 -6 Q6 -6 11.5 0 Q6 6.2 0 6.2 Q-6 6.2 -11.5 0 Z" fill="#202a85"/><path d="M-8.8 0 Q-4.6 -3.8 0 -3.8 Q4.6 -3.8 8.8 0 Q4.6 4 0 4 Q-4.6 4 -8.8 0 Z" fill="#fff"/><circle cx="0" cy="0" r="4.2" fill="#202a85"/><circle cx="-1.4" cy="-1.2" r="1.1" fill="#fff"/></svg></div><div class="c" style="left:34px;width:31px">71A</div><div class="c" style="left:65px;width:871px"><div class="by" style="left:-0.2px"><b>0 0 0 0 0 0 0 0</b><u>00</u></div><div class="by" style="left:89.8px"><b>0 0 1 1 1 1 1 0</b><u>3E</u></div></div><div class="c" style="left:936px;width:49px">802</div><div class="c" style="left:985px;width:53px">6.3 с</div><div class="c" style="left:1038px;width:104px;border-right:none;line-height:12px;padding-top:5px">0<br>0x0</div></div>
<div class="row" style="top:271px">
<div class="c" style="left:0;width:34px"><svg style="left:3.4px;top:8.2px" width="25" height="14" viewBox="-12.5 -7 25 14"><path d="M-11.5 0 Q-6 -6 0 -6 Q6 -6 11.5 0 Q6 6.2 0 6.2 Q-6 6.2 -11.5 0 Z" fill="#202a85"/><path d="M-8.8 0 Q-4.6 -3.8 0 -3.8 Q4.6 -3.8 8.8 0 Q4.6 4 0 4 Q-4.6 4 -8.8 0 Z" fill="#fff"/><circle cx="0" cy="0" r="4.2" fill="#202a85"/><circle cx="-1.4" cy="-1.2" r="1.1" fill="#fff"/></svg></div><div class="c" style="left:34px;width:31px">7A0</div><div class="c" style="left:65px;width:871px"></div><div class="c" style="left:936px;width:49px">1</div><div class="c" style="left:985px;width:53px">189 мс</div><div class="c" style="left:1038px;width:104px;border-right:none;line-height:12px;padding-top:5px">0<br>0x0</div></div>
<div class="a" style="left:1130px;top:0;width:16px;height:284px;background:#f0f0f0"></div>
<svg style="left:1135.5px;top:7.5px" width="6" height="4"><path d="M0 3.5 L3 0 L6 3.5 Z" fill="#555"/></svg>
<svg style="left:1135.5px;top:272.5px" width="6" height="4"><path d="M0 0 L3 3.5 L6 0 Z" fill="#555"/></svg>
<div class="a" style="left:1130px;top:76px;width:15px;height:151px;border:1px solid #8f8f8f;border-radius:2px;background:linear-gradient(90deg,#f5f5f5 0%,#e9e9e9 45%,#d6d6d8 60%,#c6c6ca 100%);box-shadow:inset 0 0 0 1px rgba(255,255,255,.8)"></div>
<div class="a" style="left:1134px;top:148px;width:8px;height:7px;background:repeating-linear-gradient(#6b6b6b 0 1px,#fff 1px 2px,transparent 2px 3px)"></div>
<div class="a" style="left:0;top:284px;width:1146px;height:16px;background:#f0f0f0"></div>
<div class="a" style="left:1px;top:284px;width:17px;height:16px;border:1px solid #a8a8a8;border-radius:2px;background:linear-gradient(#f5f5f5,#dcdcdc)"></div>
<svg style="left:7px;top:289px" width="5" height="7"><path d="M4 0 L0 3.5 L4 7 Z" fill="#4a4a4a"/></svg>
<div class="a" style="left:1112px;top:284px;width:17px;height:16px;border:1px solid #a8a8a8;border-radius:2px;background:linear-gradient(#f5f5f5,#dcdcdc)"></div>
<svg style="left:1119px;top:289px" width="5" height="7"><path d="M0 0 L4 3.5 L0 7 Z" fill="#4a4a4a"/></svg>
<div class="a" style="left:18px;top:284px;width:682px;height:16px;border:1px solid #979797;border-radius:2px;background:linear-gradient(#f4f4f4 0%,#eaeaea 45%,#d8d8d8 55%,#cdcdcd 100%);box-shadow:inset 0 0 0 1px rgba(255,255,255,.8)"></div>
<div class="a" style="left:355px;top:288px;width:8px;height:7px;background:repeating-linear-gradient(90deg,#6b6b6b 0 1px,#fff 1px 2px,transparent 2px 3px)"></div>
</div>
<div class="a" style="left:201px;top:583px;width:1148px;height:6px;background:#f0f0f0"></div>
<!-- ===== Передача ===== -->
<div class="sect" style="top:594px;letter-spacing:.95px">Передача</div><div class="sectline" style="left:266px;top:599px;width:1083px"></div>
<div class="a jl" style="left:201px;top:607px;width:1148px">Использование функции «Передача» Пользователем может привести к выходу из строя как всего транспортного средства, так и его отдельных компонентов. Активируя данную функцию, Пользователь принимает</div>
<div class="a jl" style="left:201px;top:620px;width:1148px">указанные риски. ООО «НПО «ГалилеоСкай» не несет ответственности за любые возможные последствия активации Пользователем функции «Передача». Устанавливая флажок «Я согласен», Пользователь</div>
<div class="a nw" style="left:201px;top:633px">подтверждает, что ознакомлен и согласен с вышеуказанной информацией.</div>
<div class="a" style="left:738px;top:651px;width:13px;height:13px;border:1px solid #8e8f8f;background:linear-gradient(135deg,#d4d8de,#f4f4f4);box-shadow:inset 0 0 0 1px #f4f4f4, inset 0 0 0 2px #d2d4d8"></div>
<div class="a nw g" style="left:757px;top:652px;letter-spacing:-.2px">Я согласен</div>
<!-- ===== bottom bar ===== -->
<div class="a nw" style="left:190px;top:713px;background:linear-gradient(90deg,#d40000 0%,#d65a00 35%,#b89a00 55%,#3a9a00 75%,#008a2a 100%);-webkit-background-clip:text;background-clip:text;color:transparent">Легенда</div>
<div class="btn dis" style="left:849px;top:705px;width:73px;height:28px;line-height:28px">Применить</div>
<div class="btn dis" style="left:936px;top:705px;width:105px;height:28px;line-height:28px;text-align:left;padding-left:4px;letter-spacing:-.05px">Сбросить вкладку<svg style="left:96px;top:20px" width="6" height="4"><path d="M0 0 L3 3.4 L6 0 Z" fill="#9a9a9a"/></svg></div>
<div class="btn dis" style="left:1045px;top:705px;width:109px;height:28px;line-height:28px;text-align:left;padding-left:4px;letter-spacing:.25px">Загрузить вкладку<svg style="left:100px;top:20px" width="6" height="4"><path d="M0 0 L3 3.4 L6 0 Z" fill="#9a9a9a"/></svg></div>
<div class="btn" style="left:1168px;top:705px;width:90px;height:28px;line-height:28px;font-size:12px;text-align:left;padding-left:28px">Открыть...
<svg style="left:3px;top:3px" width="24" height="20" viewBox="0 0 24 20"><defs><linearGradient id="fo" x1="0" y1="0" x2="0" y2="1"><stop offset="0" stop-color="#9cc3f5"/><stop offset="1" stop-color="#5c93e0"/></linearGradient></defs><path d="M1.4 3.4 Q1.4 2 2.8 2 H7.6 L9.4 4 H17.4 Q18.6 4 18.6 5.2 V7 H1.4 Z" fill="#7aaae8"/><path d="M1.4 6 H18.6 V16.4 H1.4 Z" fill="#86b2ec"/><path d="M3.8 7.6 H21.6 Q22.6 7.6 22.2 8.6 L19.6 16.6 Q19.2 17.4 18.2 17.4 H1.6 Q.6 17.4 1 16.4 Z" fill="url(#fo)"/></svg></div>
<div class="btn" style="left:1262px;top:705px;width:99px;height:28px;line-height:28px;font-size:12px;text-align:left;padding-left:28px;letter-spacing:-.3px">Сохранить...
<svg style="left:3px;top:2px" width="22" height="22" viewBox="0 0 22 22"><path d="M1 2 Q1 1 2 1 H20 Q21 1 21 2 V20 Q21 21 20 21 H2 Q1 21 1 20 Z" fill="#2b2b2b"/><rect x="4" y="1.4" width="12.4" height="6.6" fill="#d8eef2"/><rect x="12.4" y="2.4" width="2.4" height="4.6" fill="#2b2b2b"/><rect x="3.4" y="10" width="15.2" height="8.6" fill="#e3eff8"/><path d="M3.4 12.2H18.6M3.4 14.4H18.6M3.4 16.6H18.6" stroke="#b5c9d8" stroke-width=".8"/><rect x="3.4" y="18.4" width="15.2" height="2.6" fill="#f07a10"/></svg></div>
<!-- ===== taskbar ===== -->
<div id="taskbar">
<div class="a" style="left:105px;top:1px;width:160px;height:29px;border:1px solid #1a1f2a;border-radius:3px;background:radial-gradient(ellipse 70% 120% at 0% 60%,rgba(255,255,255,.55),rgba(255,255,255,0) 100%),linear-gradient(#c9d3e0 0%,#b6c3d4 45%,#a0afc5 50%,#aab8cc 100%);box-shadow:inset 0 0 0 1px rgba(255,255,255,.8)"></div>
<svg style="left:112.8px;top:5px" width="20" height="20" viewBox="0 0 20 20"><path d="M15.3 4 L9.4 9.9" stroke="#c9d1dc" stroke-width="1.7" stroke-linecap="round"/><path d="M13.6 4.6 L14.4 3.4 L15.9 3.5 L16 5 L14.9 5.9 Z" fill="#dde4ec" stroke="#9aa6b5" stroke-width=".4"/><path d="M9.3 10.3 L4.6 15.2" stroke="#1f4e9e" stroke-width="4" stroke-linecap="round"/><path d="M9.3 10.3 L4.6 15.2" stroke="#3f76c9" stroke-width="1.6" stroke-linecap="round" stroke-dasharray="1 1"/><path d="M9.7 6.2 L8.9 3.5 L6.6 3 L7.2 5.5 L5.5 7.2 L3 6.6 L3.5 8.9 L6.2 9.7 L7.6 9.2 L13.2 15 Q14.2 15.6 15 14.8 Q15.7 14 15 13 L9.2 7.6 Z" fill="#f2f3f4" stroke="#b4b2a8" stroke-width=".5" stroke-linejoin="round"/></svg>
<div class="a nw" style="left:135px;top:8px;font-size:12px;line-height:14px;color:#fff;text-shadow:0 0 2px rgba(40,50,70,.6)">Configurator4</div>
<!-- start orb -->
<svg style="left:7px;top:-7px" width="40" height="38" viewBox="-20 -20 40 38"><defs><radialGradient id="ob" cx=".5" cy=".95" r=".95"><stop offset="0" stop-color="#25e0ff"/><stop offset=".25" stop-color="#1596d6"/><stop offset=".6" stop-color="#155a9c"/><stop offset="1" stop-color="#1a4377"/></radialGradient><linearGradient id="og" x1="0" y1="0" x2="0" y2="1"><stop offset="0" stop-color="#fff" stop-opacity=".8"/><stop offset="1" stop-color="#fff" stop-opacity=".1"/></linearGradient></defs><circle r="18" fill="#0f4c85"/><circle r="16.8" fill="url(#ob)"/><path d="M-15.4 -5.4 A16.2 16.2 0 0 1 15.4 -5.4 Q0 -1 -15.4 -5.4 Z" fill="url(#og)"/><g transform="translate(.6 .2) scale(1.16)"><path d="M-7.6 -7.6 Q-3.6 -9.4 -.8 -7.4 L-2.4 -.6 Q-5.4 -2.4 -9.4 -.8 Z" fill="#ee5a23"/><path d="M.8 -6.8 Q4.4 -5 8.6 -7 L6.8 -.2 Q3 1.6 -.8 -.2 Z" fill="#8cc63e"/><path d="M-9.8 .8 Q-6 -.8 -2.8 1 L-4.6 7.8 Q-7.8 5.8 -11.6 7.6 Z" fill="#3aa7ea"/><path d="M-1.2 1.6 Q2.6 3.4 6.4 1.6 L4.6 8.4 Q.8 10.2 -3 8.4 Z" fill="#fcc314"/></g></svg>
<!-- chrome -->
<svg style="left:73px;top:7px" width="16" height="16" viewBox="-8 -8 16 16"><g transform="scale(.935)"><circle r="7.6" fill="#dd4b3e"/><path d="M0 0 L-6.6 -3.8 A7.6 7.6 0 0 0 -.9 7.55 L3.1 1 Z" fill="#1f9d58"/><path d="M0 0 L-.9 7.55 A7.6 7.6 0 0 0 6.6 -3.8 L0 -3.6 Z" fill="#fccd3f"/><path d="M-6.6 -3.8 A7.6 7.6 0 0 1 6.6 -3.8 L0 -3.6 Z" fill="#dd4b3e"/><circle r="3.6" fill="#f4f4f4"/><circle r="2.8" fill="#4a8af4"/></g></svg>
<!-- tray -->
<div class="a nw" style="left:1080px;top:7px;font-size:11px;line-height:13px;color:#e8edf4;letter-spacing:-.3px">RU</div>
<svg style="left:1111.4px;top:13px" width="9" height="7"><path d="M0 6.4 L4.3 .6 L8.6 6.4 Z" fill="#4b5570"/><path d="M.4 5.6 L4.3 .4 L8.2 5.6 Z" fill="#f4f6fa"/></svg>
<svg style="left:1132px;top:8.6px" width="16" height="17" viewBox="0 0 16 17"><g fill="none" stroke="#1e2430" stroke-width="2.8" stroke-linejoin="round"><rect x="1.4" y="2" width="8" height="13" rx="1"/><path d="M3.6 1.2 H7.2"/></g><g fill="none" stroke="#fff" stroke-width="1.5" stroke-linejoin="round"><rect x="1.4" y="2" width="8" height="13" rx="1"/><path d="M3.6 1.2 H7.2"/></g><path d="M8.5 .4 V4 M11.9 .4 V4 M6.4 4.4 H14.2 M10.3 9.4 V15.6" stroke="#1e2430" stroke-width="2.6" fill="none"/><path d="M6.6 4.2 H14 V6.4 Q14 9.8 10.3 9.8 Q6.6 9.8 6.6 6.4 Z" fill="#fff" stroke="#1e2430" stroke-width=".9"/><path d="M8.5 .6 V4.2 M11.9 .6 V4.2" stroke="#fff" stroke-width="1.3"/><path d="M10.3 9.6 V15.4" stroke="#fff" stroke-width="1.4"/></svg>
<svg style="left:1156px;top:8px" width="17" height="16" viewBox="0 0 17 16"><path d="M.8 5 H3 L7.4 .8 V15 L3 10.8 H.8 Z" fill="#fafafa" stroke="#2a3140" stroke-width=".8" stroke-linejoin="round"/><circle cx="9.2" cy="8" r=".9" fill="#fff"/><path d="M10.8 4.6 Q12.8 8 10.8 11.4 M12.9 2.8 Q15.9 8 12.9 13.2" fill="none" stroke="#fff" stroke-width="1.2" stroke-linecap="round"/></svg>
<div class="a nw" style="left:1206px;top:10px;font-size:10px;line-height:12px;color:#000">49</div>
<div class="a nw" style="left:1230px;top:10px;font-size:10px;line-height:12px;color:#000">48</div>
<div class="a nw" style="left:1252px;top:10px;font-size:10px;line-height:12px;color:#ff0000;letter-spacing:.6px">1.9</div>
<div class="a nw" style="left:1303px;top:9px;font-size:11px;line-height:13px;color:#fff;letter-spacing:-.3px">2:05</div>
<div class="a" style="left:1352px;top:0;width:14px;height:31px;border-left:1px solid #3c4556;background:linear-gradient(90deg,#a4b2c6,#7c8ba3 50%,#65748d);box-shadow:inset 1px 0 0 rgba(255,255,255,.5)"></div>
</div>

</body>
</html>
